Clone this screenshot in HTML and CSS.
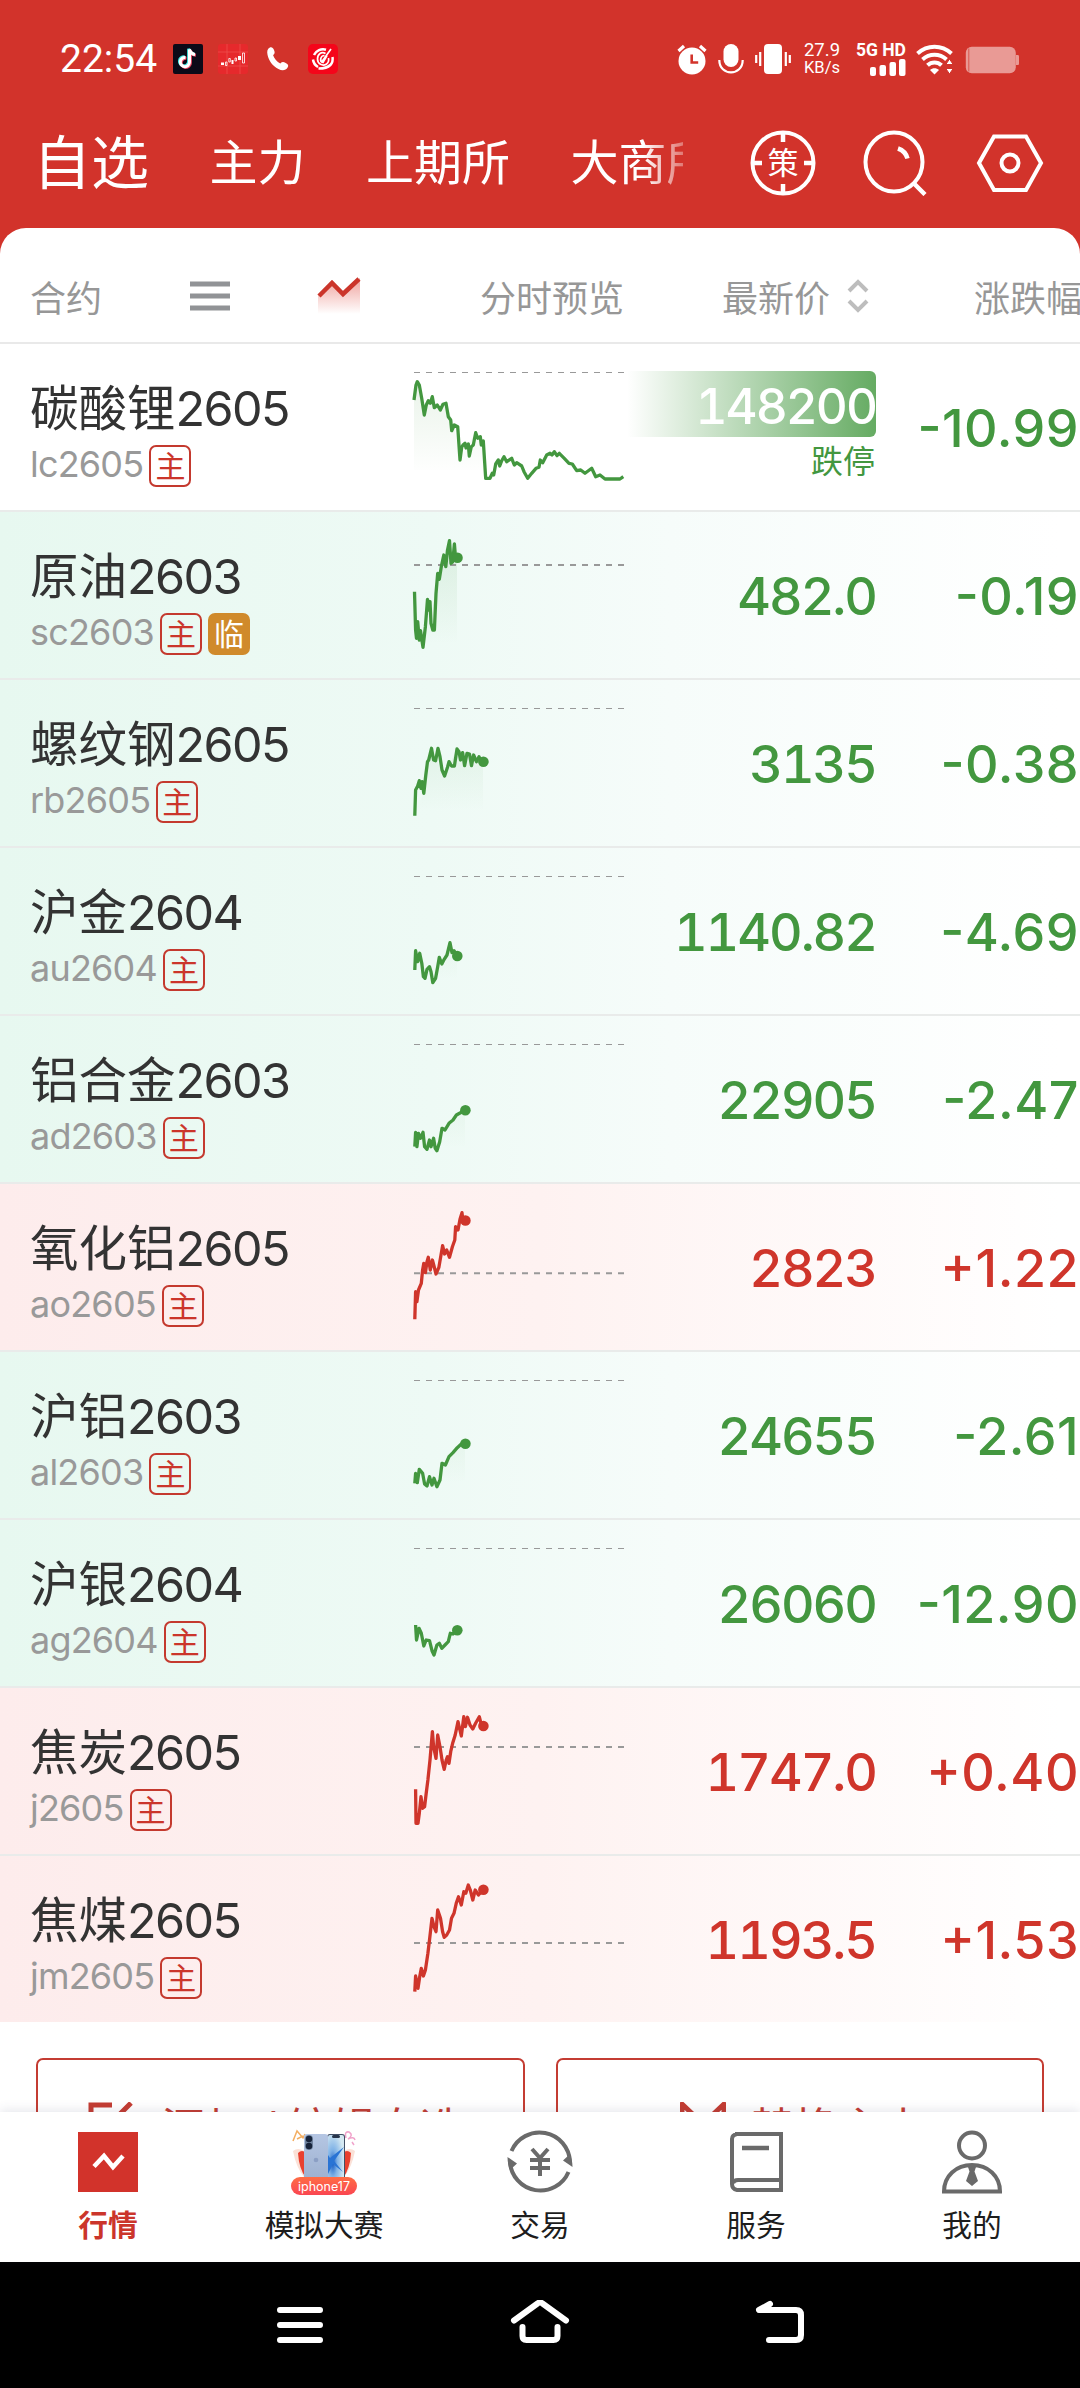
FILE: index.html
```html
<!DOCTYPE html>
<html lang="zh-CN">
<head>
<meta charset="utf-8">
<title>自选行情</title>
<link rel="stylesheet" href="styles.css">
</head>
<body>
<div class="app">
  <header class="top">
    <div class="status">
      <span class="clock">22:54</span>
      <div class="status-apps">
        <svg width="30" height="30" viewBox="0 0 30 30"><rect width="30" height="30" rx="2" fill="#0c0a18"/><path d="M12.500 13.500a4.600 4.600 0 1 0 4 4.600V5.500c.8 3 2.600 4.600 5.500 5" transform="translate(-.9 -.8)" fill="none" stroke="#3fe6e0" stroke-width="3"/><path d="M12.500 13.500a4.600 4.600 0 1 0 4 4.600V5.500c.8 3 2.600 4.600 5.500 5" transform="translate(.9 .8)" fill="none" stroke="#ee4a66" stroke-width="3"/><path d="M12.500 13.500a4.600 4.600 0 1 0 4 4.600V5.500c.8 3 2.600 4.600 5.500 5" fill="none" stroke="#fff" stroke-width="3"/></svg>
        <svg width="30" height="30" viewBox="0 0 30 30"><rect width="30" height="30" rx="3" fill="#e6292c"/><path d="M0 8h30M0 22h30M9 0v30M22 0v30" stroke="#ee5350" stroke-width=".7"/><path d="M3 18.500h3v2.500H3zM13.500 16h2v4h-2zM20 12h3v4h-3z" fill="#fff"/><path d="M9 18v3.500H7.500V18zM12.300 14.500V18h-1.500v-3.500zM18.500 14v3H17v-3zM26.500 9v10h-2V9z" fill="none" stroke="#fff" stroke-width=".8"/></svg>
        <svg width="30" height="30" viewBox="0 0 30 30"><path d="M5 4.200c2-.9 3.400-.3 4.500 2.300 1.100 2.500.9 3.500-.9 5.200 1.300 3.500 3.700 6.300 7.200 8.300 1.800-1.700 3-1.800 5.400-.5 2.600 1.400 3.100 2.700 1.900 4.500-1.800 2.900-5.300 3.500-9.200 1.500C7.900 22.300 4.300 17.300 3 11.300 2.300 7.700 3 5.200 5 4.200z" fill="#fff" transform="translate(1.500 -.5)"/></svg>
        <svg width="30" height="30" viewBox="0 0 30 30"><rect width="30" height="30" rx="5" fill="#f5051a"/><path d="M18 5.700A10 10 0 0 0 6 11M5 15.500A10 10 0 0 0 10 23M24.500 13c1 6-2 11.500-14 11.500" fill="none" stroke="#fff" stroke-width="2.500"/><path d="M17.500 9.500c-4-2.500-8 .5-8 5.500s5 7.500 9 5c2-1.500 2.500-3.500 2-6" fill="none" stroke="#fff" stroke-width="1.700"/><path d="M23 5 14 17.500M16.500 11.500c-4 0-5.500 6-1.500 7l4-7" fill="none" stroke="#fff" stroke-width="1.700"/></svg>
      </div>
      <div class="status-right">
        <svg width="30" height="32" viewBox="0 0 30 32"><circle cx="15" cy="18" r="13.500" fill="#fff"/><path d="M1.500 8 7 3M28.500 8 23 3" stroke="#fff" stroke-width="3.200"/><path d="M14.700 11.500v8h6.500" fill="none" stroke="#d2332b" stroke-width="2.600"/></svg>
        <svg class="mic" width="26" height="32" viewBox="0 0 26 32"><rect x="5.500" y="1" width="15" height="23" rx="7.500" fill="#fff"/><path d="M1.300 17c0 16.500 23.400 16.500 23.400 0" fill="none" stroke="#fff" stroke-width="2.200"/></svg>
        <svg class="vibrate" width="36" height="32" viewBox="0 0 36 32"><rect x="9" y="1" width="18" height="30" rx="4" fill="#fff"/><path d="M1.200 12v8M5.200 9v14M34.800 12v8M30.800 9v14" stroke="#fff" stroke-width="2.200"/></svg>
        <div class="speed"><span>27.9</span><span>KB/s</span></div>
        <div class="signal"><span>5G HD</span><svg width="36" height="17" viewBox="0 0 36 17" fill="#fff"><rect y="8" width="6" height="9" rx="2"/><rect x="9.500" y="6" width="6.500" height="11" rx="2"/><rect x="19.500" y="3" width="6.500" height="14" rx="2"/><rect x="29" y="0" width="6.500" height="17" rx="2"/></svg></div>
        <svg class="wifi" width="38" height="32" viewBox="0 0 38 32"><path d="M1.500 10.500c10-9 24-9 34 0M6.500 16.500c7-6.300 17-6.300 24 0M11.500 22.300c4-3.800 10-3.800 14 0" fill="none" stroke="#fff" stroke-width="4"/><path d="M14 27c2.500-2.300 6.500-2.300 9 0l-4.500 4.500z" fill="#fff"/><path d="m33.500 16 3.700 5.500h-7.400zM33.500 31l3.700-5.500h-7.400z" fill="#fff" stroke="#d2332b" stroke-width="1"/></svg>
        <svg class="battery" width="55" height="28" viewBox="0 0 55 28"><rect x=".8" y=".8" width="50" height="26.400" rx="6" fill="#e99a95"/><path d="M51 9h1.500c1 0 1.500.5 1.500 1.500v7c0 1-.5 1.500-1.500 1.500H51z" fill="#e99a95"/><path d="M3.800 2.500v23" stroke="#d8564f" stroke-width="1"/></svg>
      </div>
    </div>
    <div class="nav">
      <nav class="markets"><span class="active">自选</span><span>主力</span><span>上期所</span><span>大商所</span></nav>
      <div class="tools">
        <svg width="66" height="66" viewBox="0 0 66 66"><circle cx="33" cy="33" r="30.500" fill="none" stroke="#fff" stroke-width="4"/><path d="M33 3v9M33 54v9M3 33h9M54 33h9" stroke="#fff" stroke-width="4.500"/><text class="strategy" x="33" y="44" text-anchor="middle">策</text></svg>
        <svg width="66" height="66" viewBox="0 0 66 66"><path d="M51 53.500 62 64.500M35 18.500q7.500 2.500 9.500 10" stroke="#fff" stroke-width="4.500" fill="none"/><ellipse cx="31" cy="32" rx="28.500" ry="29.500" fill="none" stroke="#fff" stroke-width="4"/></svg>
        <svg width="68" height="66" viewBox="0 0 68 66"><path d="M18 6.500h32L65 33 50 60H18L3 33z" fill="none" stroke="#fff" stroke-width="4"/><circle cx="34" cy="33" r="8.500" fill="none" stroke="#fff" stroke-width="4"/></svg>
      </div>
    </div>
  </header>

  <main class="sheet">
    <div class="thead">
      <div class="th-name"><span>合约</span>
        <svg class="ic-list" width="40" height="32" viewBox="0 0 40 32"><path d="M0 4h40M0 16h40M0 28h40" stroke="#919396" stroke-width="4.800"/></svg>
        <svg class="ic-trend" width="44" height="40" viewBox="0 0 44 40"><defs><linearGradient id="trend" x1="0" y1="0" x2="0" y2="1"><stop offset="0" stop-color="#e0463c" stop-opacity=".5"/><stop offset="1" stop-color="#e0463c" stop-opacity="0"/></linearGradient></defs><path d="M1 20 15 6l11 12L43 2v36H1z" fill="url(#trend)"/><path d="M2 20 15 7l11 11L42 3" fill="none" stroke="#cb352b" stroke-width="4.500"/></svg>
      </div>
      <span class="th-spark">分时预览</span>
      <span class="th-price">最新价<svg width="22" height="36" viewBox="0 0 22 36"><path d="M2 13 11 4l9 9M2 23l9 9 9-9" fill="none" stroke="#bdbdbd" stroke-width="4"/></svg></span>
      <span class="th-change">涨跌幅</span>
    </div>

    <svg class="defs" width="0" height="0"><defs><linearGradient id="area" gradientUnits="userSpaceOnUse" x1="0" y1="20" x2="0" y2="104"><stop offset="0" stop-color="#43973f" stop-opacity=".1"/><stop offset="1" stop-color="#43973f" stop-opacity="0"/></linearGradient></defs></svg>

    <div class="row plain down">
      <div class="contract"><div class="name">碳酸锂<b>2605</b></div><div class="code"><span>lc2605</span><i class="tag">主</i></div></div>
      <svg class="spark" width="210" height="110" viewBox="0 0 210 110"><path class="area" d="M0 28 3 10 10 43 18 25 26 38 32 31 40 53 46 88 61 61 70 69V98H0z"/><path class="base edge" d="M0 .5h210"/><polyline points="0,28 2,13 3.300,9.700 5.300,13 7.700,26.300 10.300,43 12.300,33 14.300,28.700 16.300,31.300 18.300,24.700 20.300,35.700 23.300,33 26.300,38 29,32.300 32,31.300 34.300,44.700 36.700,48 37.700,58.700 40.300,53 43.700,54.700 46,88 47.700,75.300 49,73 51,71.300 52,76 54.300,72 55.300,84 57.300,74.700 59.300,73 61.700,60.700 63.700,66.300 66.300,64.700 67.300,73 69.300,69 71.700,106.300 76,106.300 78.300,101.300 79.700,103 81.700,92 84.300,88 85.700,94 87.700,88.700 90,84.700 92.700,89.700 97.700,86.300 100.300,93 102.700,90.700 107.700,94 110,99.700 113.700,106.300 117.700,101.300 122,96.300 125,95.300 126.300,88 128.700,90.700 132.700,83 136,81.300 138,83 140.300,79.700 143,83.700 145.300,81.300 150.300,86.300 155,91.300 158.300,92 162.700,98.700 166.700,98 171,101.300 177.700,96.300 181.700,104.700 186,103 191,107 206,107 209.300,104.700"/></svg>
      <div class="price limit"><strong>148200</strong><em>跌停</em></div>
      <div class="change">-10.99</div>
    </div>
    <div class="row down">
      <div class="contract"><div class="name">原油<b>2603</b></div><div class="code"><span>sc2603</span><i class="tag">主</i><i class="tag night">临</i></div></div>
      <svg class="spark" width="210" height="110" viewBox="0 0 210 110"><path class="area" d="M9 107 22 53 30 15 43 18V105z"/><path class="base" d="M0 25h210"/><polyline points=".5,51.700 1.600,90 2.500,98.300 3.700,81.700 5.300,100 6.500,90.700 9,107.300 11.400,86.700 13.500,59.300 14.700,70 16,61.700 17,83.300 18.800,90 20.400,90 22,53.300 23.700,33.300 25.300,39.300 27.300,26.700 29.800,15 31.800,26.700 33.500,10 35.500,.7 37,23.300 38.800,21.700 40.400,4 41.600,18.300 43.500,17.700"/><circle cx="43.500" cy="17.700" r="5.300"/></svg>
      <div class="price">482.0</div>
      <div class="change">-0.19</div>
    </div>
    <div class="row down">
      <div class="contract"><div class="name">螺纹钢<b>2605</b></div><div class="code"><span>rb2605</span><i class="tag">主</i></div></div>
      <svg class="spark" width="210" height="110" viewBox="0 0 210 110"><path class="area" d="M1 105 10 85 17 40 30 68 43 41 69 54V105z"/><path class="base edge" d="M0 .5h210"/><polyline points=".8,107.700 1.600,82 3.700,78 5.300,72.700 7,80.300 8.200,73.700 9.800,85.300 11.800,67 13.500,53.700 14.700,52 17.500,40.300 19.600,52 21.600,52.700 24,40.300 26,48.700 28,62 30.600,68 33.500,59.300 35,53.700 37.500,58 40.400,58 43,41 45,43.700 46.500,52 48.600,44.700 50.600,57.700 53,45.300 55.500,46 57.500,57.700 59.600,47 62.400,53.700 65,48.700 67.800,54.700 69.400,53.700"/><circle cx="69.400" cy="53.700" r="5.300"/></svg>
      <div class="price">3135</div>
      <div class="change">-0.38</div>
    </div>
    <div class="row down">
      <div class="contract"><div class="name">沪金<b>2604</b></div><div class="code"><span>au2604</span><i class="tag">主</i></div></div>
      <svg class="spark" width="210" height="110" viewBox="0 0 210 110"><path class="area" d="M19 106 36 67 43 80V104z"/><path class="base edge" d="M0 .5h210"/><polyline points=".8,94 1.600,74.700 3.700,85.700 5.700,77.300 7.800,87.300 9.400,100.700 11,102.300 13,93.300 15.500,90.700 17,95.700 18.800,106.700 21.600,102.300 23.700,90.700 25.300,81.300 27.800,88 30.200,83.300 33,79 36,66.700 38,76.700 40,74.700 43.300,80"/><circle cx="43.300" cy="80" r="5.300"/></svg>
      <div class="price">1140.82</div>
      <div class="change">-4.69</div>
    </div>
    <div class="row down">
      <div class="contract"><div class="name">铝合金<b>2603</b></div><div class="code"><span>ad2603</span><i class="tag">主</i></div></div>
      <svg class="spark" width="210" height="110" viewBox="0 0 210 110"><path class="area" d="M23 106 28 84 51 66V104z"/><path class="base edge" d="M0 .5h210"/><polyline points=".8,102.700 1.600,88.300 2.900,102.700 4.500,89.300 6.500,94.300 9,88.300 10.600,102.700 13,105.300 15.500,96 17,102.700 19.600,94.300 21.200,104.300 22.900,106.700 25.700,97.700 28,84.300 31,86 35,79.300 39,76 42.400,71 46.500,68.700 51.400,66.300"/><circle cx="51.400" cy="66.300" r="5.300"/></svg>
      <div class="price">22905</div>
      <div class="change">-2.47</div>
    </div>
    <div class="row up">
      <div class="contract"><div class="name">氧化铝<b>2605</b></div><div class="code"><span>ao2605</span><i class="tag">主</i></div></div>
      <svg class="spark" width="210" height="110" viewBox="0 0 210 110"><path class="base" d="M0 61.300h210"/><polyline points=".8,107.300 1.600,79.700 2.900,89.700 4.500,78 7.300,71.300 8.600,58 9.800,51.300 11.400,60.700 13,49.700 14.300,45.300 16.300,58 18.400,48 20,54 22,62 24.900,55.300 27,43 28.600,33.700 30.600,42 32.700,38 35.500,45.300 38.400,34.700 40.800,28 41.600,14.700 44,18 46,7.300 48,.7 49,9.700 51.800,8.300"/><circle cx="51.400" cy="8.500" r="5.300"/></svg>
      <div class="price">2823</div>
      <div class="change">+1.22</div>
    </div>
    <div class="row down">
      <div class="contract"><div class="name">沪铝<b>2603</b></div><div class="code"><span>al2603</span><i class="tag">主</i></div></div>
      <svg class="spark" width="210" height="110" viewBox="0 0 210 110"><path class="area" d="M23 106 28 83 51 64V100z"/><path class="base edge" d="M0 .5h210"/><polyline points=".8,103.300 1.600,93.300 3.300,102.700 5.300,89.300 8.600,93.300 10.600,104 13,106 15.500,96.700 18,105 20,98.300 22.900,106.700 26,100 28,83.300 31.400,85 35,76.700 39,72.700 43.300,67.700 47.300,64 51.400,63.700"/><circle cx="51.400" cy="63.700" r="5.300"/></svg>
      <div class="price">24655</div>
      <div class="change">-2.61</div>
    </div>
    <div class="row down">
      <div class="contract"><div class="name">沪银<b>2604</b></div><div class="code"><span>ag2604</span><i class="tag">主</i></div></div>
      <svg class="spark" width="210" height="110" viewBox="0 0 210 110"><path class="base edge" d="M0 .5h210"/><polyline points="1.600,77 2.500,92 5,80.300 7.300,85.300 9.800,98 12.200,92 15.500,92.700 18,102.700 20,107 22.900,97 25.300,95.300 27.800,100.300 31,97 34.300,93.700 36.300,85.300 39,86 43.300,82.300"/><circle cx="43.300" cy="82.300" r="5.300"/></svg>
      <div class="price">26060</div>
      <div class="change">-12.90</div>
    </div>
    <div class="row up">
      <div class="contract"><div class="name">焦炭<b>2605</b></div><div class="code"><span>j2605</span><i class="tag">主</i></div></div>
      <svg class="spark" width="210" height="110" viewBox="0 0 210 110"><path class="base" d="M0 31h210"/><polyline points="1.600,73.300 2,107.300 4,107.300 5.300,97.300 7,80.700 8.600,92.300 10.600,90.700 12.200,77.300 13.900,64 16,44 18.400,15.700 19.600,30.700 22,42.300 23.700,19 26,30.700 28,44 30.200,53.300 32.200,44 33.500,40.700 35,47.300 36.700,35.700 38.800,26.700 41.200,19 44,5.700 47.300,20 49.800,.7 51.400,10.700 53.500,1.300 56,9 58.800,13 61.600,7.300 65.300,.7 67,7.300 69.400,10"/><circle cx="69.400" cy="10" r="5.300"/></svg>
      <div class="price">1747.0</div>
      <div class="change">+0.40</div>
    </div>
    <div class="row up">
      <div class="contract"><div class="name">焦煤<b>2605</b></div><div class="code"><span>jm2605</span><i class="tag">主</i></div></div>
      <svg class="spark" width="210" height="110" viewBox="0 0 210 110"><path class="base" d="M0 59h210"/><polyline points=".8,107.700 1.600,92 4,104.300 5.700,92.700 7.300,84.300 9.400,92 11.400,86 13.900,69.300 15.500,56 18,34.300 20,42.700 22,47.700 23.700,26 26.500,34.300 28.600,47.700 30.200,53.300 32.700,51 35.500,46 37.500,34.300 40,29.300 42.400,18.700 44.500,12.700 47.300,21 49.800,7.700 51.800,9.300 54.300,1 56.300,6 58.800,16 61.200,6 64.500,11 69.400,5.700"/><circle cx="69.400" cy="5.700" r="5.300"/></svg>
      <div class="price">1193.5</div>
      <div class="change">+1.53</div>
    </div>

    <div class="actions">
      <div class="btn"><svg width="46" height="46" viewBox="0 0 46 46"><path d="M24 3H3v40h38V24M43 1 22 22" fill="none" stroke="#c43c32" stroke-width="5"/></svg><span>添加<i class="slash">/</i>编辑自选</span></div>
      <div class="btn swap"><svg width="46" height="46" viewBox="0 0 46 46"><path d="M2 2v40l42-40v40z" fill="none" stroke="#c43c32" stroke-width="5" stroke-linejoin="round"/></svg><span>替换主力</span></div>
    </div>
  </main>

  <nav class="tabs">
    <div class="tab on"><svg width="66" height="66" viewBox="0 0 66 66"><rect x="3" y="3" width="60" height="60" fill="#d2332b"/><path d="M19 37.500 29 27l9 11L48 27" fill="none" stroke="#fff" stroke-width="4.500"/></svg><span>行情</span></div>
    <div class="tab"><svg width="66" height="66" viewBox="0 0 66 66"><defs><linearGradient id="pill" x1="0" y1="0" x2="0" y2="1"><stop offset="0" stop-color="#ff6d45"/><stop offset="1" stop-color="#fa4651"/></linearGradient><linearGradient id="back" x1="0" y1="0" x2="0" y2="1"><stop offset="0" stop-color="#b5c6e3"/><stop offset="1" stop-color="#9db0cf"/></linearGradient><radialGradient id="screen" cx=".3" cy=".6" r=".7"><stop offset="0" stop-color="#155cc4"/><stop offset=".4" stop-color="#7fb2e6"/><stop offset="1" stop-color="#d5e9f2"/></radialGradient></defs><path d="M2 22q5-4 11 0v26Q5 38 2 22M64 22q-5-4-11 0v26q8-10 11-26" fill="#fbe1d7"/><path d="M7 24q4-4 8 0v25Q8 40 7 24M60 24q-4-4-8 0v25q7-9 8-25" fill="#e8402f"/><path d="M2 12 6 2l6 7 2-4M6 10l6-3" fill="none" stroke="#f3ae62" stroke-width="1.500"/><path d="M55 9q-2-7 3-6 5 3-1 7 6-3 7 1M61 13l2 3" fill="none" stroke="#f1a3cb" stroke-width="1.500"/><rect x="36" y="5" width="18" height="48" rx="3" fill="#435066"/><rect x="37" y="6" width="16" height="47" rx="2" fill="url(#screen)"/><path d="m39 29 14-11-10 14 9 11-10-8-5 10V26z" fill="#2974d4"/><rect x="41" y="6" width="8" height="3" rx="1.500" fill="#26344a"/><rect x="13" y="5" width="24" height="48" rx="3" fill="url(#back)"/><rect x="14" y="6" width="8" height="15" rx="4" fill="#70849f"/><circle cx="18" cy="10" r="3.200" fill="#17233a"/><circle cx="18" cy="17" r="3.200" fill="#17233a"/><circle cx="25" cy="31" r="2.300" fill="#8b9fc4"/><rect y="48" width="66" height="18" rx="9" fill="url(#pill)"/><text class="pill-text" x="33" y="61.500" text-anchor="middle">iphone17</text></svg><span>模拟大赛</span></div>
    <div class="tab"><svg width="66" height="66" viewBox="0 0 66 66" fill="none" stroke="#6a6a6a" stroke-width="4"><path d="M4.500 22A30.500 30.500 0 0 1 63 33M61.500 43A30.500 30.500 0 0 1 3 33"/><path d="M65.500 38c0-5-1-9-2.500-13l-7 6.500zM.5 28c0 5 1 9 2.500 13l7-6.500z" fill="#6a6a6a" stroke="none"/><path d="m25 20 8 9 8-9M23 31h20M23 39h20M33 28v19"/></svg><span>交易</span></div>
    <div class="tab"><svg width="66" height="66" viewBox="0 0 66 66" fill="none" stroke="#6a6a6a" stroke-width="4"><path d="M12 5h46v56H14q-5-1-5-6V10q0-4 5-5M10 54q1-3 5-3h43" /><path d="M19 19h27" stroke-width="4.500"/></svg><span>服务</span></div>
    <div class="tab"><svg width="66" height="66" viewBox="0 0 66 66" fill="none" stroke="#6a6a6a" stroke-width="4"><circle cx="33" cy="16.500" r="13"/><path d="M5 62.500h56C61 47 49 36 33 36S5 47 5 62.500z"/><path d="M29 38h8l-1.500 4.500L39 52l-6 5-6-5 3.500-9.500z" fill="#6a6a6a" stroke="none"/></svg><span>我的</span></div>
  </nav>

  <footer class="sysnav">
    <svg width="60" height="50" viewBox="0 0 60 50"><path d="M10 10h40M10 25h40M10 40h40"/></svg>
    <svg width="60" height="50" viewBox="0 0 60 50"><path d="M4 20.500 27.500 3.500q2.500-2 5 0L56 20.500M12.500 27v9q0 4 4 4h27q4 0 4-4v-9"/></svg>
    <svg width="60" height="50" viewBox="0 0 60 50"><path d="M20 4 9 10h37q5 0 5 5v20q0 5-5 5H19"/></svg>
  </footer>
</div>
</body>
</html>
```
FILE: styles.css
```css
* { box-sizing: border-box; }

body {
  margin: 0;
  background: #fff;
  font-family: Inter, "Noto Sans CJK SC", sans-serif;
}

svg { display: block; flex: none; }

.app {
  width: 1080px;
  height: 2388px;
  display: flex;
  flex-direction: column;
  overflow: hidden;
  background: #d2332b;
}

/* Header */
.top { flex: none; height: 228px; color: #fff; }

.status {
  height: 118px;
  padding: 0 60px;
  display: flex;
  align-items: center;
}
.clock { width: 113px; font: 400 39px/40px Roboto, sans-serif; }
.status-apps { display: flex; gap: 15px; }
.status-right {
  margin-left: auto;
  display: flex;
  align-items: center;
}
.mic { margin-left: 11px; }
.vibrate { margin-left: 11px; }
.speed {
  width: 38px;
  margin-left: 12px;
  display: flex;
  flex-direction: column;
  align-items: center;
  font: 400 18.500px/17px Roboto, sans-serif;
}
.speed span:last-child { font-size: 16.500px; }
.signal {
  width: 50px;
  margin-left: 15px;
  display: flex;
  flex-direction: column;
  align-items: flex-end;
  font: 700 17.500px/17px Roboto, sans-serif;
  white-space: nowrap;
}
.wifi { margin-left: 10px; }
.battery { margin: 2px 0 0 11px; }

.nav {
  height: 89px;
  padding: 0 36px 0 33px;
  display: flex;
  align-items: center;
  justify-content: space-between;
}
.markets {
  width: 650px;
  display: flex;
  align-items: center;
  gap: 60.5px;
  overflow: hidden;
  white-space: nowrap;
  font-size: 48px;
  line-height: 80px;
  -webkit-mask-image: linear-gradient(90deg, #000 610px, rgba(0, 0, 0, .35));
  mask-image: linear-gradient(90deg, #000 610px, rgba(0, 0, 0, .35));
}
.markets span { flex: none; }
.markets .active { font-size: 58px; }
.tools { display: flex; gap: 47px; }
.strategy { fill: #fff; font: 400 31px "Noto Sans CJK SC", sans-serif; }

/* Quote table */
.sheet {
  flex: none;
  height: 1884px;
  overflow: hidden;
  border-radius: 26px 26px 0 0;
  background: #fff;
}
.thead, .row {
  display: grid;
  grid-template-columns: 384px 210px 252px 204px;
  padding-left: 30px;
}
.thead {
  height: 116px;
  padding-top: 22px;
  align-items: center;
  border-bottom: 2px solid #e9e9e9;
  color: #979797;
  font-size: 36px;
}
.th-name { display: flex; align-items: center; }
.ic-list { margin: -1px 0 0 88px; }
.ic-trend { margin: -1px 0 0 87px; }
.th-spark { text-align: right; }
.th-price {
  display: flex;
  align-items: center;
  justify-content: flex-end;
  gap: 17px;
  padding-right: 7px;
}
.th-change { padding-left: 98px; white-space: nowrap; }
.defs { position: absolute; }

.row {
  height: 168px;
  border-bottom: 2px solid #e9ebea;
  background: linear-gradient(90deg, #e7f8f0, #eefaf5 40%, #f6fcfa 62%, #fff 98%);
}
.row.up { background: linear-gradient(90deg, #fdecec, #fef2f1 50%, #fff 98%); }
.row.plain { background: #fff; }
.row:nth-last-child(2) { border-bottom-color: #fff; }
.row.down { color: #43973f; }
.row.up { color: #cf352b; }

.contract { padding-top: 35px; }
.name { color: #333; font-size: 48.500px; line-height: 60px; height: 66px; }
.name b { font-weight: 400; letter-spacing: -1.600px; }
.code { display: flex; align-items: flex-start; gap: 6px; }
.code span {
  color: #999;
  font-size: 36px;
  font-weight: 400;
  line-height: 38px;
  letter-spacing: -.8px;
}
.tag {
  width: 42px;
  height: 42px;
  border: 2px solid #c4392e;
  border-radius: 7px;
  color: #cb352b;
  font: normal 400 30px/35px "Noto Sans CJK SC", sans-serif;
  text-align: center;
}
.tag.night { border-color: #d08a2b; background: #d08a2b; color: #fff; }

.spark { margin-top: 28px; overflow: visible; }
.spark polyline { fill: none; stroke: currentColor; stroke-width: 3.3; stroke-linejoin: round; }
.spark circle { fill: currentColor; }
.area { fill: url(#area); }
.base { stroke: #999; stroke-width: 2; stroke-dasharray: 6 6; }
.base.edge { stroke-width: 1; }

.price, .change {
  padding-top: 2px;
  font-size: 52px;
  font-weight: 500;
  line-height: 166px;
  text-align: right;
}
.price {
  padding-right: 0;
  font-variant-numeric: tabular-nums;
  letter-spacing: -2px;
}
.change {
  padding-right: 1px;
  font-feature-settings: "case";
  letter-spacing: .5px;
}
.price.limit {
  padding: 27px 0 0 3px;
  line-height: 66px;
}
.limit strong {
  display: block;
  height: 66px;
  border-radius: 0 6px 6px 0;
  background: linear-gradient(90deg, #fff, #65ab62);
  color: #fff;
  font-size: 49.500px;
  font-weight: 500;
  line-height: 70px;
}
.limit em {
  display: block;
  padding-right: 1px;
  font: normal 400 32px/45px "Noto Sans CJK SC", sans-serif;
  letter-spacing: 0;
}

.actions { display: flex; gap: 31px; padding: 34px 36px 0; }
.btn {
  width: 489px;
  height: 132px;
  display: flex;
  align-items: center;
  justify-content: center;
  gap: 27px;
  border: 2px solid #c43c32;
  border-radius: 7px;
  color: #c43c32;
  font-size: 44.500px;
  padding: 2px 8px 0 0;
}
.btn.swap { gap: 24px; padding: 2px 0 0 8px; }
.slash { padding: 0 10px; font-style: normal; }

/* Bottom bar */
.tabs {
  flex: none;
  position: relative;
  height: 150px;
  display: grid;
  grid-template-columns: repeat(5, 1fr);
  background: #fff;
  box-shadow: 0 -2px 10px rgba(60, 70, 110, .13);
}
.tab {
  display: flex;
  flex-direction: column;
  align-items: center;
  padding-top: 17px;
  color: #1d1d1d;
  font-size: 29.700px;
  line-height: 60px;
}
.tab.on { color: #cb352b; font-weight: 700; }
.pill-text { fill: #fff; font: 400 12.500px Inter, sans-serif; }

.sysnav {
  flex: none;
  height: 126px;
  display: flex;
  justify-content: center;
  align-items: center;
  gap: 180px;
  background: #000;
}
.sysnav path {
  fill: none;
  stroke: #fff;
  stroke-width: 6;
  stroke-linecap: round;
  stroke-linejoin: round;
}
```
